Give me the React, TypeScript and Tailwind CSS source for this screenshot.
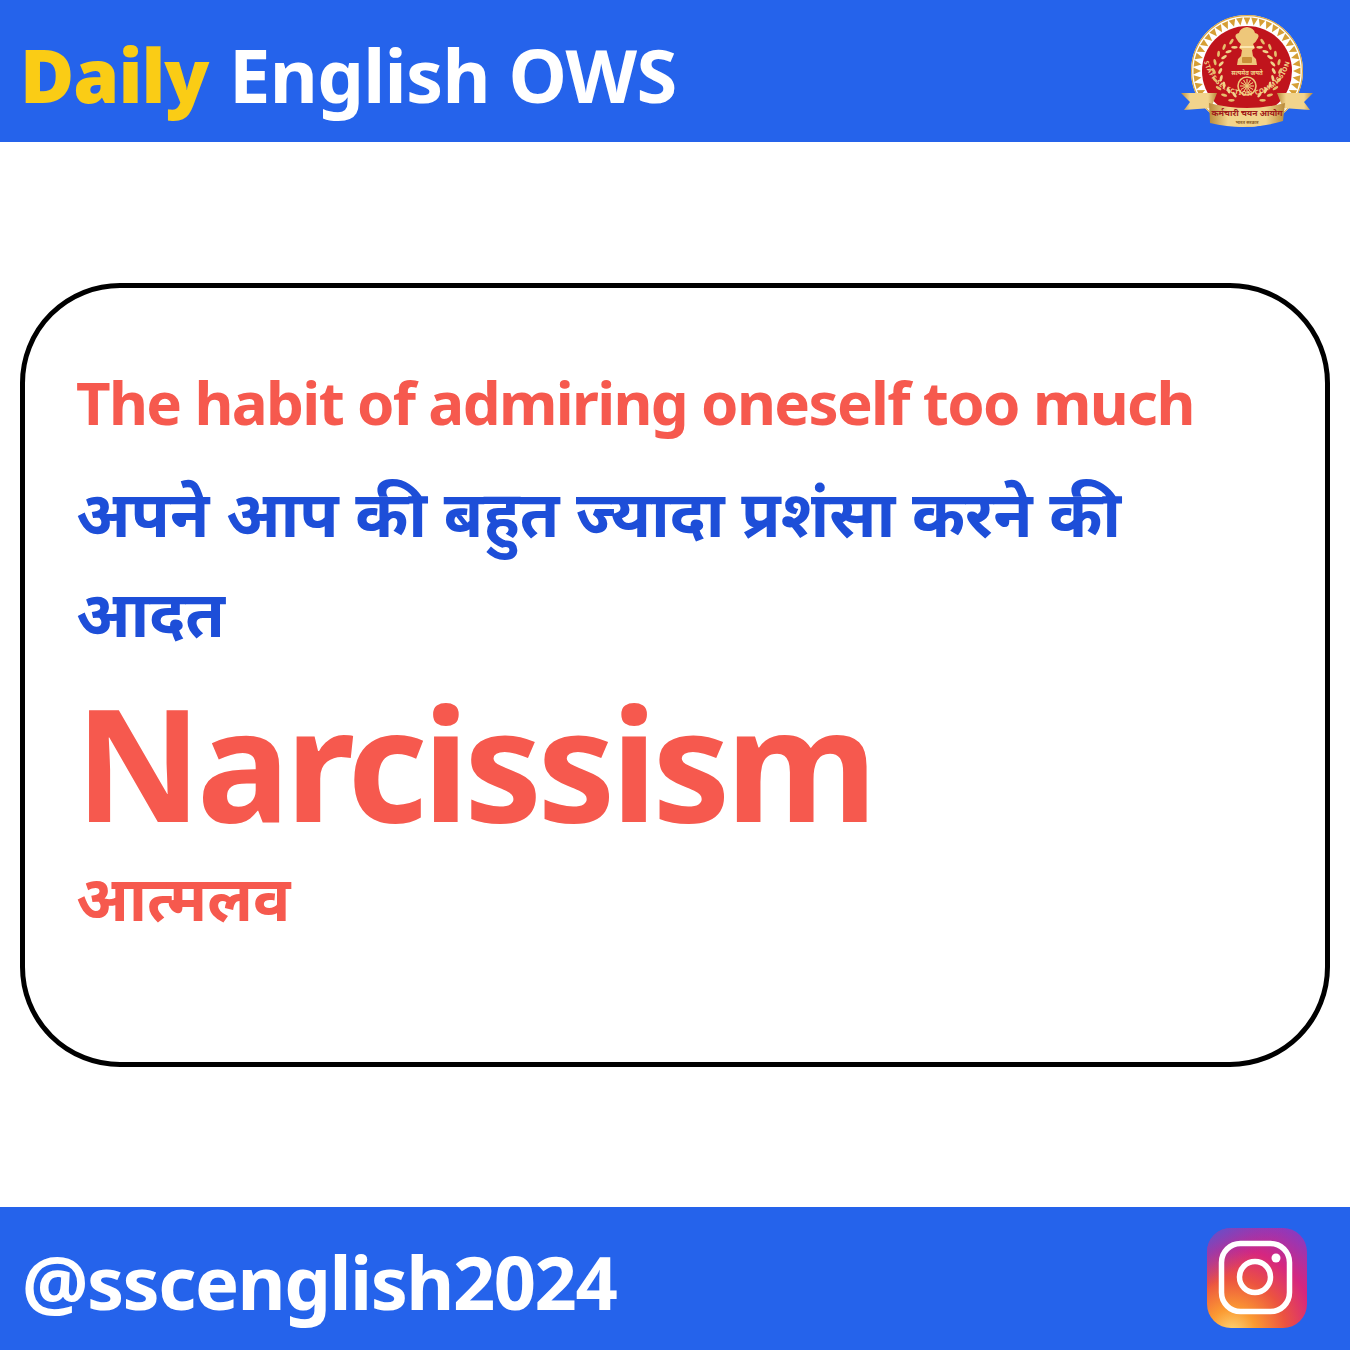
const SscLogo = () => {
  const rays = Array.from({ length: 44 }, (_, i) => (i * 360) / 44);
  const grains = [0, 1, 2, 3, 4, 5, 6, 7, 8];
  return (
    <svg width="136" height="116" viewBox="0 0 136 116">
      <defs>
        <linearGradient id="gold" x1="0" y1="0" x2="1" y2="0">
          <stop offset="0" stopColor="#b98a3a" />
          <stop offset="0.25" stopColor="#f2d48c" />
          <stop offset="0.75" stopColor="#f2d48c" />
          <stop offset="1" stopColor="#b98a3a" />
        </linearGradient>
        <path id="sealArc" d="M25 48 A44 44 0 0 0 111 48" />
      </defs>
      <circle cx="68" cy="58" r="56" fill="#fff" />
      <circle cx="68" cy="58" r="55.4" fill="none" stroke="#dca945" strokeWidth="1.2" />
      {rays.map((a) => (
        <polygon key={a} points="64.6,4.5 71.4,4.5 68,12" fill="#d69f35" transform={`rotate(${a} 68 58)`} />
      ))}
      <circle cx="68" cy="58" r="45" fill="#c0141c" />
      {/* emblem */}
      <path d="M57 25 Q55 21 60 20 Q61 15 68 14 Q75 15 76 20 Q81 21 79 25 Q77 29 74 31 L76 35 L73 37 L74 43 L77 46 L78 52 L58 52 L59 46 L62 43 L63 37 L60 35 L62 31 Q59 29 57 25 Z" fill="#eec77a" />
      <rect x="61" y="33" width="14" height="2" fill="#fbe6b0" />
      <rect x="63" y="44" width="10" height="6" rx="1" fill="#c98f38" />
      <text x="68" y="62" textAnchor="middle" fontSize="6" fontWeight="700" fill="#f3d48a" fontFamily="'Noto Sans', sans-serif">सत्यमेव जयते</text>
      {[-1, 1].map((s) => (
        <g key={s} transform={`translate(68 58) scale(${s} 1)`}>
          {grains.map((i) => {
            const deg = -62 + i * 15.5;
            const t = deg * (Math.PI / 180);
            const x = 30 * Math.cos(t);
            const y = 30 * Math.sin(t);
            return (
              <g key={i} transform={`translate(${x} ${y}) rotate(${deg})`}>
                <ellipse cx="-3.2" cy="0" rx="1.4" ry="3.2" fill="#f0d28a" transform="rotate(-28 -3.2 0)" />
                <ellipse cx="3.2" cy="0" rx="1.4" ry="3.2" fill="#e6be6c" transform="rotate(28 3.2 0)" />
              </g>
            );
          })}
        </g>
      ))}
      <circle cx="68" cy="73" r="9" fill="#c0141c" stroke="#eec77a" strokeWidth="1.6" />
      {Array.from({ length: 12 }, (_, i) => i * 30).map((a) => (
        <line key={a} x1="68" y1="66" x2="68" y2="80" stroke="#eec77a" strokeWidth="0.7" transform={`rotate(${a} 68 73)`} />
      ))}
      <text fontSize="6.4" fontWeight="700" fill="#f3d48a" letterSpacing="0.7" fontFamily="'Noto Sans', sans-serif">
        <textPath href="#sealArc" startOffset="50%" textAnchor="middle">STAFF SELECTION COMMISSION</textPath>
      </text>
      {/* ribbon */}
      <path d="M2 80 L38 80 L32 95 L5 97 L11 89 Z" fill="url(#gold)" />
      <path d="M134 80 L98 80 L104 95 L131 97 L125 89 Z" fill="url(#gold)" />
      <path d="M30 90 Q68 100 106 90 L104 108 Q68 119 31 110 Z" fill="url(#gold)" />
      <text x="68" y="103" textAnchor="middle" fontSize="8.5" fontWeight="700" fill="#a01b1b" fontFamily="'Noto Sans', sans-serif">कर्मचारी चयन आयोग</text>
      <text x="68" y="111" textAnchor="middle" fontSize="4.5" fontWeight="700" fill="#8a5a1c" fontFamily="'Noto Sans', sans-serif">भारत सरकार</text>
    </svg>
  );
};

const InstagramIcon = () => (
  <svg width="100" height="100" viewBox="0 0 100 100">
    <defs>
      <radialGradient id="ig1" cx="0.25" cy="1.05" r="1.2">
        <stop offset="0" stopColor="#fdd97a" />
        <stop offset="0.2" stopColor="#fb9a32" />
        <stop offset="0.45" stopColor="#ec5340" />
        <stop offset="0.7" stopColor="#d6267f" />
        <stop offset="1" stopColor="#8a3ac0" />
      </radialGradient>
      <linearGradient id="ig2" x1="0" y1="0" x2="0.3" y2="0.4">
        <stop offset="0" stopColor="#5558d0" />
        <stop offset="1" stopColor="#8a3ac0" stopOpacity="0" />
      </linearGradient>
    </defs>
    <rect width="100" height="100" rx="24" fill="url(#ig1)" />
    <rect width="100" height="100" rx="24" fill="url(#ig2)" />
    <rect x="14.5" y="15.5" width="68" height="68" rx="19" fill="none" stroke="#fff" strokeWidth="5.5" />
    <circle cx="48" cy="49" r="15.5" fill="none" stroke="#fff" strokeWidth="5.5" />
    <circle cx="69" cy="30" r="4.5" fill="#fff" />
  </svg>
);

export default function App() {
  return (
    <div className="w-[1350px] h-[1350px] flex flex-col justify-between bg-white font-['Noto_Sans',sans-serif] font-bold">
      <header className="h-[142px] bg-[#2563eb] flex items-center justify-between pl-[20px] pr-[35px]">
        <h1 className="text-[74px] leading-none text-white tracking-[-0.7px] pt-[8px]">
          <span className="text-[#facc15] font-black tracking-[-1px] mr-[2px]">Daily</span> English OWS
        </h1>
        <SscLogo />
      </header>

      <main className="mx-[20px] h-[784px] border-[5px] border-black rounded-[100px] px-[51px] pt-[81px]">
        <p className="text-[60px] leading-[66px] text-[#f6594e] tracking-[-1.65px]">The habit of admiring oneself too much</p>
        <p className="mt-[28px] text-[64px] leading-[100px] text-[#1d4ed8]">अपने आप की बहुत ज्यादा प्रशंसा करने की आदत</p>
        <p className="mt-[4px] -ml-[1px] text-[156px] leading-[190px] text-[#f6594e] tracking-[-5px]">Narcissism</p>
        <p className="text-[62px] leading-[80px] text-[#f6594e]">आत्मलव</p>
      </main>

      <footer className="h-[143px] bg-[#2563eb] flex items-center justify-between pl-[22px] pr-[43px] pb-[2px]">
        <span className="text-[74px] leading-none text-white tracking-[-1.5px] pt-[8px]">@sscenglish2024</span>
        <InstagramIcon />
      </footer>
    </div>
  );
}
